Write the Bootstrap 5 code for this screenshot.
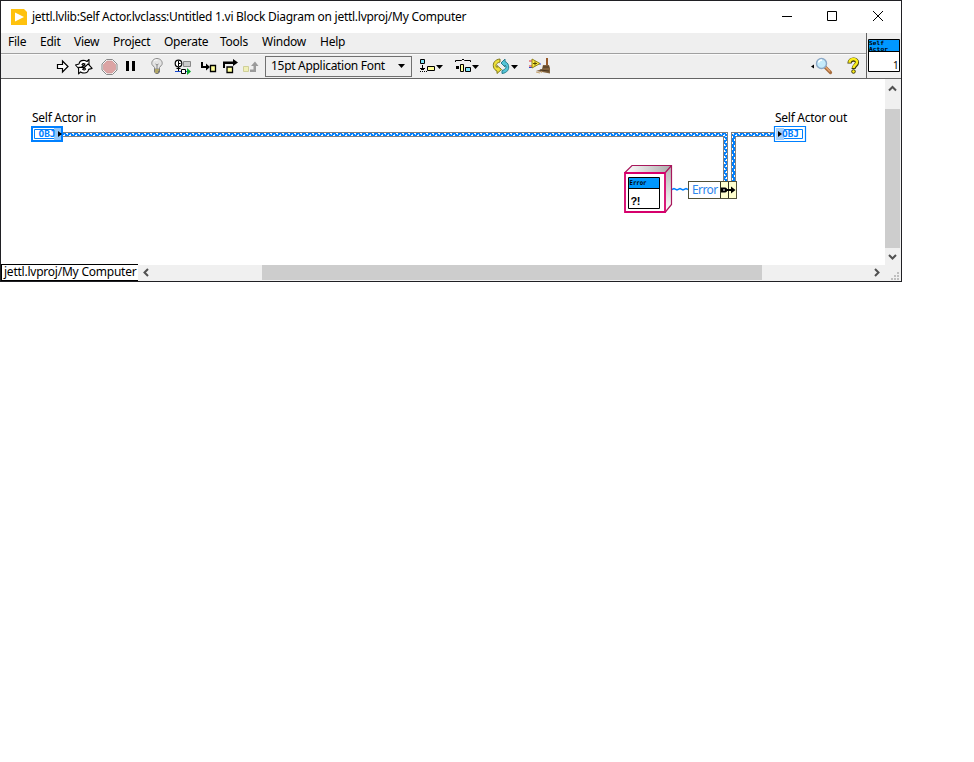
<!DOCTYPE html>
<html lang="en">
<head>
<meta charset="utf-8">
<title>Block Diagram</title>
<meta name="viewport" content="width=device-width, initial-scale=1">
<link href="https://cdn.jsdelivr.net/npm/bootstrap@5.3.0/dist/css/bootstrap.min.css" rel="stylesheet">
<style>
body{font-family:"Noto Sans","Open Sans",sans-serif;font-size:12px;line-height:16px;color:#000;background:#fff}
svg{display:block;flex:none}
.win{width:902px;height:282px;border:1px solid #202024;background:#fff}
.titlebar{height:32px;padding-left:10px}
.title-text{margin-left:4px;letter-spacing:-.265px;width:440px}
.chrome{height:46px;background:#efefef;border-bottom:1px solid #646464}
.menus{height:21px;border-bottom:1px solid #a0a0a0;padding-left:7px;letter-spacing:-.25px;line-height:18px}
.menus span{flex:none}
.tools{height:24px;border-top:1px solid #fafafa}
.tools svg{margin-top:-1px}
.font-select{width:147px;height:21px;border:1px solid #707070;margin:1px -1px 0 1px;padding:0 6px 0 5px;letter-spacing:-.3px}
.font-select span{margin-top:-2px}
.vi-pane{width:35px;border-left:1px solid #646464;padding:6px 0 0 1px}
.work{height:186px}
.vbar{width:16px;background:#f0f0f0}
.vthumb{height:139px;width:15px;background:#cdcdcd}
.status{height:16px;background:#f0f0f0}
.target{width:137px;height:17px;margin-top:-1px;border:1px solid #000;border-right:0;background:#fff;padding-left:2px;line-height:14px;letter-spacing:-.23px;z-index:1}
.hthumb{width:500px;height:15px;background:#cdcdcd}
.node{position:absolute}
.lbl{letter-spacing:-.27px;line-height:16px}
.err{left:687px;top:102px;width:49px;height:18px;border:1px solid #505038;color:#2d86ec;background:#fff}
.err span{width:31px;padding-left:3px;line-height:16px;letter-spacing:-.6px}
</style>
<script src="https://cdn.jsdelivr.net/npm/bootstrap@5.3.0/dist/js/bootstrap.bundle.min.js"></script>
</head>
<body>
<main class="win d-flex flex-column overflow-hidden">
<header class="titlebar d-flex align-items-center">
 <svg width="17" height="17" viewBox="0 0 17 17"><path d="M0 0h13l3 3v13H0z" fill="#ffc20e"/><path d="M4 3.500v9l9-4.500z" fill="#fff"/></svg>
 <div class="title-text text-nowrap">jettl.lvlib:Self Actor.lvclass:Untitled 1.vi Block Diagram on jettl.lvproj/My Computer</div>
 <svg class="ms-auto" width="120" height="32" viewBox="781 1 120 32" fill="none" stroke="#000"><path d="M782 16.500h10M827.500 11.500h9v9h-9zM873 11l10 10M883 11l-10 10"/></svg>
</header>
<div class="chrome d-flex">
 <div class="flex-grow-1">
  <nav class="menus d-flex text-nowrap">
   <span style="width:32px">File</span><span style="width:34px">Edit</span><span style="width:39px">View</span><span style="width:51px">Project</span><span style="width:56px">Operate</span><span style="width:42px">Tools</span><span style="width:58px">Window</span><span>Help</span>
  </nav>
  <div class="tools d-flex">
   <svg width="71" height="24" viewBox="1 54 71 24"><path d="M57.500 64.500h5v-3.500l5.500 5.500-5.500 5.500v-3.500h-5z" fill="#fff" stroke="#000" stroke-width="1.200"/></svg>
   <svg width="26" height="24" viewBox="72 54 26 24" fill="none"><g stroke="#000" stroke-linejoin="round"><path id="cyc" d="M79 64c.5-3 3-4 6-3.500l2 1 2-2v6.500h-6l2-2c-1.500-1-2.500-.5-3 .5l1.500 1-4 4-4-4.500z" fill="#fff" stroke-width="1.100"/><use href="#cyc" transform="rotate(180 83.800 66.700)"/></g></svg>
   <svg width="24" height="24" viewBox="98 54 24 24"><path d="M106.500 59.500h6l4.500 4.500v6l-4.500 4.500h-6l-4.500-4.500v-6z" fill="#f5f5f5" stroke="#888"/><path d="M107 61h5l3.500 3.500v5L112 73h-5l-3.500-3.500v-5z" fill="#dca4a4" stroke="#c78f8f" stroke-width=".6"/></svg>
   <svg width="20" height="24" viewBox="122 54 20 24"><path d="M126 61h3v10h-3zM132 61h3v10h-3z"/></svg>
   <svg width="26" height="24" viewBox="142 54 26 24"><path d="M154.500 69v-1.500l-2.500-3c-1-3 1.500-6 5-6s6 3 5 6l-2.500 3V69z" fill="#e4e4e4" stroke="#8b8b8b"/><path d="M154 61l1.500-1h2" stroke="#fff" fill="none"/><path d="M155.500 64l1.500 1 1.500-1M157 65v4" stroke="#888" fill="none"/><path d="M154 69h6v3l-2 2h-2l-2-2z" fill="#777"/><path d="M155 70h4M155 72h3" stroke="#ecd659"/></svg>
   <svg width="28" height="24" viewBox="168 54 28 24" fill="none"><circle cx="178.500" cy="63.500" r="3.300" fill="#fff" stroke="#000" stroke-width="1.200"/><path d="M178.500 61v5M178.500 63.500h2" stroke="#000"/><path d="M178.500 67v4M176.500 68.500h4" stroke="#000"/><path d="M183.500 61.500h7v5h-7z" fill="#ccc" stroke="#888"/><path d="M175 71.500h7M186 71.500h3" stroke="#1546ce"/><path d="M181.500 69.500h4v4h-4z" fill="#fff" stroke="#000"/><path d="M187 68l4 3.500-4 3.500z" fill="#0ba82a"/></svg>
   <svg width="24" height="24" viewBox="196 54 24 24"><path d="M201 62h2v4h3v-2.500l4 3.500-4 3.500V68h-5z"/><path d="M210.500 65.500h5v6h-5z" fill="#ffff98" stroke="#000" stroke-width="1.300"/></svg>
   <svg width="21" height="24" viewBox="220 54 21 24"><path d="M223 61.500h10V59l5 3.500-5 3.500V64h-8v4h-2z"/><path d="M227 67h5.500v5.500H227z" fill="#ffff98" stroke="#000" stroke-width="1.300"/></svg>
   <svg width="23" height="24" viewBox="241 54 23 24"><path d="M243.500 66.500h5v5h-5z" fill="#f0f0b8" stroke="#cfcf99"/><path d="M250 69.500h3.500V66H251l4-4.500 3.500 4.500H256v6h-6z" fill="#9a9a9a"/></svg>
   <div class="font-select d-flex align-items-center justify-content-between text-nowrap"><span>15pt Application Font</span><svg width="7" height="4"><path d="M0 0h7L3.500 4z"/></svg></div>
   <svg width="38" height="24" viewBox="411 54 38 24"><path d="M420.500 59.500h4v4h-4z" fill="#7de4f7" stroke="#000"/><path d="M422.500 65v5M420 68.500h5M421 69.500h3" stroke="#000"/><path d="M420 71.500h7" stroke="#000" stroke-dasharray="1 1"/><path d="M427.500 66.500h7v4h-7z" fill="#ffff98" stroke="#000"/><path d="M436 65h7l-3.500 4z"/></svg>
   <svg width="38" height="24" viewBox="449 54 38 24"><path d="M455.500 62v-1.500h6l1.500-1.500 1.500 1.500h6V62" fill="none" stroke="#000"/><path d="M456 66h3v3h-3z"/><path d="M460.500 64.500h3v7h-3z" fill="#ffff98" stroke="#000"/><path d="M465.500 67.500h5v4h-5z" fill="#7de4f7" stroke="#000"/><path d="M472 65h7l-3.500 4z"/></svg>
   <svg width="36" height="24" viewBox="487 54 36 24" fill="none"><path d="M500 59c-5 .5-7.500 4-6.500 8 .5 2 2 3.500 3.500 4v2.500l4.500-4-4.500-4v2c-2-1.500-1-4.500 3-5.500z" fill="#eee13a" stroke="#80791d"/><path d="M502 73.500c5-.5 7.500-4 6.500-8-.5-2-2-3.500-3.500-4V59l-4 4 4 4v-2c2 1.500 1 4.500-3 5.500z" fill="#54c4d7" stroke="#277d8c"/><path d="M511 65h7l-3.500 4z" fill="#000"/></svg>
   <svg width="30" height="24" viewBox="523 54 30 24"><path d="M529 61h4M529 66h3" stroke="#e03030"/><path d="M529 67.500h4M538 64h3" stroke="#2444d8"/><path d="M532 59v9l8-4.500z" fill="#ffed43" stroke="#91821b"/><path d="M533 63.500h4M535 61.500v4" stroke="#554800"/><path d="M546 58h2v7h-2z" fill="#985929"/><path d="M543 65h6l1 3v5.500l-8-1.500-6-1 6-2z" fill="#80613d"/><path d="M543 67h6M540 70l9 1" stroke="#49351f"/><path d="M536 72l4 1M542 71l-1 2" stroke="#c6a36e"/></svg>
   <svg class="ms-auto" width="66" height="24" viewBox="800 54 66 24"><path d="M814 64.500v4l-3-2z"/><path d="M825 67l5.500 5.500" stroke="#a56c3d" stroke-width="3.200" stroke-linecap="round"/><path d="M825 66.500l5 5" stroke="#e7a36d" stroke-width="1.400"/><circle cx="821.500" cy="63.500" r="5" fill="#c5ebfb" stroke="#8ba8c6" stroke-width="1.400"/><path d="M818.500 62.500c.5-2 2-2.500 3.500-2.500" stroke="#fff" stroke-width="1.500" fill="none"/><path d="M849.500 63.500c0-5 7.500-5 7.500-1 0 3-3.500 3-3.500 6.500" stroke="#403b0c" stroke-width="4.200" fill="none"/><path d="M849.500 62.800c0-5 7.500-5 7.500-.8 0 3-3.500 3-3.500 6" stroke="#faed19" stroke-width="2.500" fill="none"/><circle cx="853.500" cy="71.500" r="1.800" fill="#faed19" stroke="#403b0c"/></svg>
  </div>
 </div>
 <aside class="vi-pane"><svg width="33" height="33" viewBox="868 38 33 33"><path d="M868.500 38.500h31v32h-31z" fill="#fff" stroke="#000"/><path d="M869 39h30v11h-30z" fill="#0098ff"/><path d="M868 50.500h32" stroke="#000"/><g font-family="DejaVu Sans Mono,monospace" font-size="5.500" font-weight="bold"><text x="869" y="44" textLength="15" lengthAdjust="spacingAndGlyphs">Self</text><text x="869" y="49.500" textLength="19" lengthAdjust="spacingAndGlyphs">Actor</text></g><text x="893" y="68" font-size="10" font-family="Noto Sans,sans-serif">1</text></svg></aside>
</div>
<div class="work d-flex">
 <section class="position-relative flex-grow-1">
  <svg class="node top-0 start-0" width="884" height="185" viewBox="1 79 884 185">
   <defs><pattern id="h" width="6" height="5" patternUnits="userSpaceOnUse" x="0" y="132"><path d="M0 0h6v5H0z" fill="#0080ff"/><path d="M0 .5h6M0 4.500h6" stroke="#808080"/><path d="M0 1.500h2M3 3.500h2" stroke="#fff"/><path d="M1 2.500h1M4 2.500h1" stroke="#b8dcff"/></pattern>
   <pattern id="v" width="5" height="6" patternUnits="userSpaceOnUse" x="723" y="0"><path d="M0 0h5v6H0z" fill="#0080ff"/><path d="M.5 0v6M4.500 0v6" stroke="#808080"/><path d="M1.500 0v2M3.500 3v2" stroke="#fff"/><path d="M2.500 1v1M2.500 4v1" stroke="#b8dcff"/></pattern></defs>
   <path d="M63 132h665v5H63zM731 132h43v5h-43z" fill="url(#h)"/>
   <path d="M723 136h5v45h-5z" fill="url(#v)"/><path d="M0 0h5v45h-5z" transform="translate(731 136)" fill="#0080ff"/><path d="M731.500 132v49M735.500 137v44" stroke="#808080"/><path d="M732.500 136v45" stroke="#fff" stroke-dasharray="2 4"/><path d="M734.500 139v42" stroke="#fff" stroke-dasharray="2 4"/><path d="M727.500 132v5" stroke="#808080"/>
   <path d="M672 189.500l2-1 3 1.500 3-1.500 3 1.500 3-1.500 2 1" fill="none" stroke="#0080ff" stroke-width="1.500"/>
   <path d="M32 127h30v14H32z" fill="#fff" stroke="#0080ff" stroke-width="2"/><path d="M34.500 129.500h25v9h-25z" fill="none" stroke="#0080ff"/><path d="M54 128h7v12h-7z" fill="#8fc5fa"/><path d="M58 131v6l4-3z"/><text x="38.500" y="137" font-family="DejaVu Sans Mono,monospace" font-weight="bold" font-size="8" textLength="17" lengthAdjust="spacingAndGlyphs" fill="#0080ff">OBJ</text>
   <path d="M774.500 126.500h31v15h-31z" fill="#fff" stroke="#0080ff" stroke-width="1.200"/><path d="M777.500 129.500h25v9h-25z" fill="none" stroke="#0080ff"/><path d="M776 128h8v12h-8z" fill="#a5d0fb"/><path d="M778 131v6l4-3z"/><text x="782" y="137" font-family="DejaVu Sans Mono,monospace" font-weight="bold" font-size="8" textLength="17" lengthAdjust="spacingAndGlyphs" fill="#0080ff">OBJ</text>
   <defs><linearGradient id="g"><stop stop-color="#fff"/><stop offset="1" stop-color="#aaa"/></linearGradient><linearGradient id="g2" x1="0" y1="0" x2="0" y2="1"><stop stop-color="#b4b4b4"/><stop offset="1" stop-color="#fff"/></linearGradient></defs>
   <path d="M624.500 173l7.500-7.500h39.500l-6.500 7.500z" fill="url(#g)"/><path d="M665.500 173l6-7.500v39l-6 8z" fill="url(#g2)"/><path d="M624.500 173l7.500-7.500h39.500v39l-6.500 8M665 173l6.500-7.500" fill="none" stroke="#a8185c" stroke-width="1.200"/><path d="M625 173h40v39h-40z" fill="#fff" stroke="#d6006c" stroke-width="1.800"/>
   <path d="M628.500 177.500h31v31h-31z" fill="#fff" stroke="#000"/><path d="M629 178h30v10h-30z" fill="#0098ff"/><path d="M629 188.500h30" stroke="#000"/><text x="629.500" y="185" font-family="DejaVu Sans Mono,monospace" font-weight="bold" font-size="6.500" textLength="17" lengthAdjust="spacingAndGlyphs">Error</text><text x="630.500" y="205" font-family="Liberation Sans,sans-serif" font-weight="bold" font-size="11" textLength="10">?!</text>
  </svg>
  <div class="node lbl text-nowrap" style="left:31px;top:31px">Self Actor in</div>
  <div class="node lbl text-nowrap" style="left:774px;top:31px">Self Actor out</div>
  <div class="node err d-flex"><span>Error</span><svg width="16" height="16" viewBox="720 182 16 16"><path d="M720 182h16v16h-16z" fill="#ffffce"/><path d="M720.500 182v16M728.500 182v16" stroke="#333320"/><path d="M721 187.500h4c3 0 3 5 0 5h-4z"/><path d="M723 190h2" stroke="#fff"/><path d="M726 189h5v-2.500l4.500 3.500-4.500 3.500V191h-5z"/></svg></div>
 </section>
 <div class="vbar d-flex flex-column">
  <svg width="16" height="30" viewBox="885 79 16 30"><path d="M889 90.500l3.500-3.500 3.500 3.500" fill="none" stroke="#505050" stroke-width="2"/></svg>
  <div class="vthumb"></div>
  <svg width="16" height="16" viewBox="885 248 16 16"><path d="M889 255l3.500 3.500 3.500-3.500" fill="none" stroke="#505050" stroke-width="2"/></svg>
 </div>
</div>
<footer class="status d-flex">
 <div class="target text-nowrap">jettl.lvproj/My Computer</div>
 <svg width="124" height="16" viewBox="138 265 124 16"><path d="M148 269l-3.500 3.500 3.500 3.500" fill="none" stroke="#505050" stroke-width="2"/></svg>
 <div class="hthumb"></div>
 <svg width="139" height="16" viewBox="762 265 139 16"><path d="M875 269l3.500 3.500-3.500 3.500" fill="none" stroke="#505050" stroke-width="2"/><path d="M897 272h2v2h-2zM894 275h2v2h-2zM897 275h2v2h-2zM891 278h2v2h-2zM894 278h2v2h-2zM897 278h2v2h-2z" fill="#bfbfbf"/></svg>
</footer>
</main>
</body>
</html>
